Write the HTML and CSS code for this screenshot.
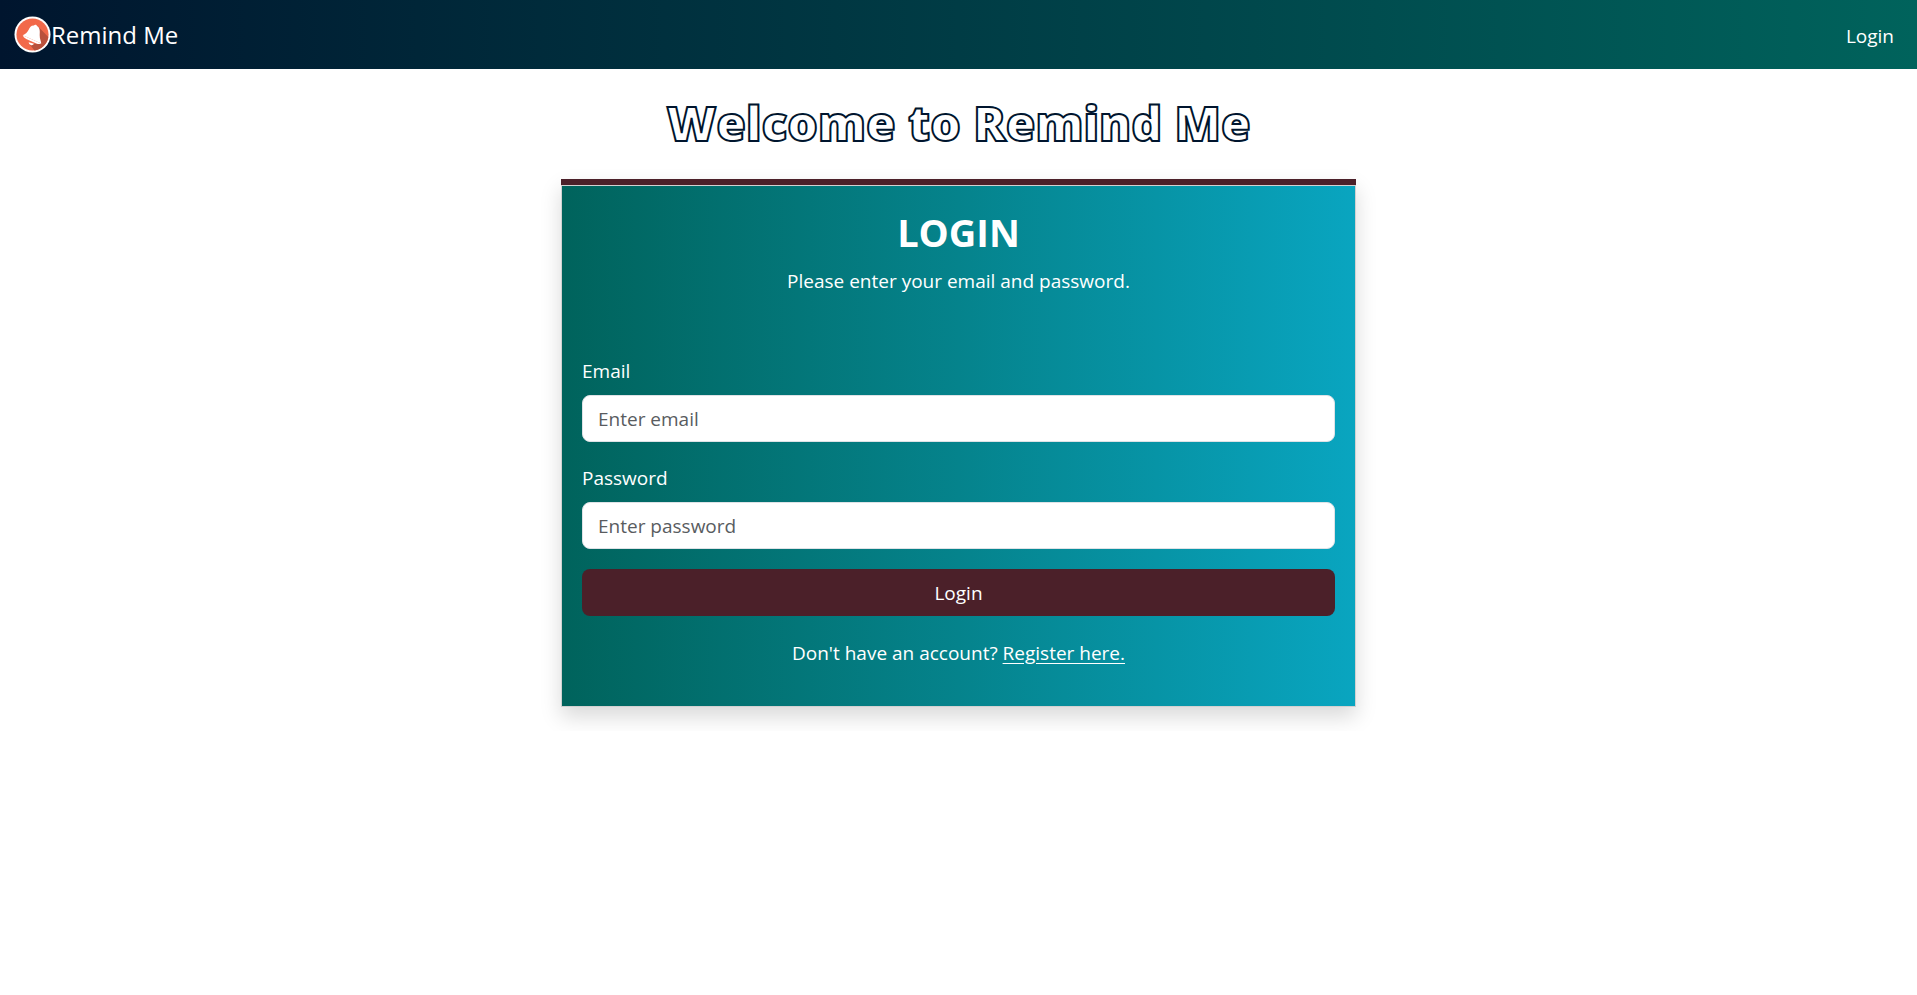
FILE: index.html
```html
<!DOCTYPE html>
<html lang="en">
<head>
  <meta charset="utf-8">
  <meta name="viewport" content="width=device-width, initial-scale=1">
  <title>Remind Me</title>
  <link rel="stylesheet" href="styles.css">
</head>
<body>
  <nav class="navbar">
    <a class="brand" href="#">
      <svg class="brand-icon" viewBox="0 0 38 38" aria-hidden="true">
        <circle cx="19" cy="19" r="18.5" fill="#fff"/>
        <circle cx="19" cy="19" r="16.5" fill="#f2694a"/>
        <path d="M24 10 35.200 21.500A16.500 16.500 0 0 1 21 35.400L16 29 27.500 28Z" fill="#b9513c"/>
        <path d="M20.500 9.800C21 8.400 23.400 8.700 23.600 10.300C27.200 12.300 26.500 16.500 26.400 20C26.300 23.500 27.600 25 28 28.300L9 19.800C11.800 18.400 13.500 17.500 14.900 14.500C16.200 11.500 17.400 9.700 20.500 9.800Z" fill="#fff"/>
        <path d="M9 19.800 28 28.300Q26 29.300 23 28.200L12.500 23.500Q9.400 22 9 19.800Z" fill="#fff"/>
        <path d="M15 27 20.500 28.600Q19.500 30.600 17.200 29.900Q15.200 29.200 15 27Z" fill="#fff"/>
      </svg>
      <span>Remind Me</span>
    </a>
    <a class="nav-link" href="#login">Login</a>
  </nav>

  <main class="container">
    <h1 class="title">Welcome to Remind Me</h1>
    <section class="panel" id="login">
      <div class="accent"></div>
      <div class="card">
        <h2 class="card-title">LOGIN</h2>
        <p class="lead">Please enter your email and password.</p>
        <form class="form">
          <div class="field">
            <label for="email">Email</label>
            <input id="email" type="email" placeholder="Enter email">
          </div>
          <div class="field">
            <label for="password">Password</label>
            <input id="password" type="password" placeholder="Enter password">
          </div>
          <button class="submit" type="submit">Login</button>
        </form>
        <p class="register">Don't have an account? <a href="#register">Register here.</a></p>
      </div>
    </section>
  </main>
</body>
</html>
```
FILE: styles.css
```css
*,
*::before,
*::after {
  box-sizing: border-box;
}

body {
  margin: 0;
  background: #fff;
  color: #fff;
  font-family: "Segoe UI", "Open Sans", "Noto Sans", sans-serif;
  font-size: 19px;
  line-height: 30px;
}

h1,
h2,
p {
  margin: 0;
}

.navbar {
  display: flex;
  align-items: center;
  justify-content: space-between;
  min-height: 69px;
  padding: 0 23px 0 14px;
  background: linear-gradient(to right, #00152e, #00635c);
}

.brand {
  display: flex;
  align-items: center;
  color: #fff;
  font-size: 24px;
  line-height: 32px;
  text-decoration: none;
}

.brand-icon {
  width: 37px;
  height: 37px;
}

.nav-link {
  padding-top: 2px;
  color: #fff;
  text-decoration: none;
}

.container {
  max-width: 1650px;
  margin: 0 auto;
  padding: 24px 15px;
}

.title {
  color: #fff;
  font-size: 48px;
  font-weight: 800;
  line-height: 60px;
  text-align: center;
  -webkit-text-stroke: 2px #00152e;
}

.panel {
  width: calc(50% - 15px);
  min-width: 320px;
  margin: 26px auto 0;
  box-shadow: 0 10px 20px rgba(0, 0, 0, 0.15);
}

.accent {
  height: 6px;
  background: #4b2029;
}

.card {
  padding: 20px;
  border: 1px solid rgba(0, 0, 0, 0.18);
  background: linear-gradient(to right, #00635c, #05838c, #09a5c0) padding-box;
}

.card-title {
  margin-bottom: 8px;
  font-size: 38px;
  font-weight: 700;
  line-height: 52px;
  text-align: center;
}

.lead,
.register {
  text-align: center;
}

.form {
  display: grid;
  gap: 20px;
  margin-top: 59px;
}

.field {
  display: grid;
  gap: 8px;
}

.field label {
  line-height: 32px;
}

.field input {
  width: 100%;
  height: 47px;
  padding: 0 15px;
  border: 1px solid #dee2e6;
  border-radius: 8px;
  background: #fff;
  color: #212529;
  font: inherit;
}

.field input::placeholder {
  color: #595c5f;
  opacity: 1;
}

.submit {
  height: 47px;
  border: 0;
  border-radius: 8px;
  background: #4b2029;
  color: #fff;
  font: inherit;
  cursor: pointer;
}

.register {
  margin: 22px 0 18px;
}

.register a {
  color: #fff;
  text-underline-offset: 3px;
}
```
